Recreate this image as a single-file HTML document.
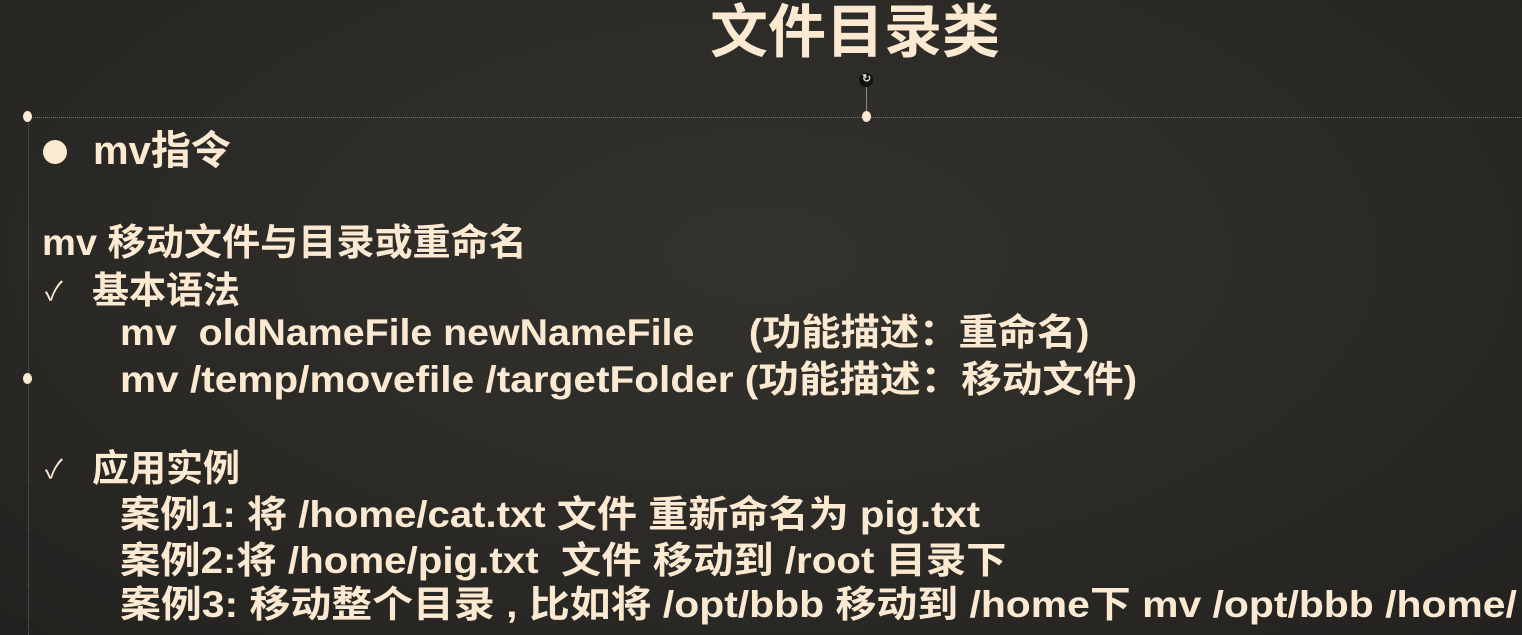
<!DOCTYPE html>
<html><head><meta charset="utf-8"><style>
html,body{margin:0;padding:0}
body{width:1522px;height:635px;overflow:hidden;position:relative;
background:radial-gradient(ellipse at 50% 40%,#34322d 0%,#2a2925 60%,#232220 100%);
font-family:"Liberation Sans","Noto Sans CJK SC",sans-serif;font-weight:bold;color:#fce9d2}
.t{position:absolute;white-space:nowrap;line-height:1;transform-origin:0 50%}
.dot{position:absolute;width:9px;height:11px;border-radius:50%;background:#fce9d2}
.ck{position:absolute;font-weight:normal;font-size:26px;line-height:1}
</style></head><body>
<div class="t" style="left:710px;top:4px;font-size:58px">文件目录类</div>
<div style="position:absolute;left:859px;top:73px;width:14px;height:14px;border-radius:50%;background:#111"></div>
<div class="t" style="left:862px;top:74px;font-size:11px;color:#ddd">↻</div>
<div style="position:absolute;left:866px;top:87px;width:1px;height:28px;background:#888"></div>
<div style="position:absolute;left:28px;top:117px;width:1494px;border-top:1px dotted #777"></div>
<div style="position:absolute;left:28px;top:117px;height:518px;border-left:1px dotted #666"></div>
<div class="dot" style="left:23px;top:111px"></div>
<div class="dot" style="left:862px;top:111px"></div>
<div class="dot" style="left:23px;top:373px"></div>
<div style="position:absolute;left:43px;top:140px;width:24px;height:24px;border-radius:50%;background:#fce9d2"></div>
<div class="t" style="left:93px;top:131px;font-size:40px">mv指令</div>
<div class="t" style="left:42px;top:224px;font-size:37px;transform:scaleX(1.03)">mv 移动文件与目录或重命名</div>
<div class="ck" style="left:45px;top:278px">✓</div>
<div class="t" style="left:92px;top:272px;font-size:37px">基本语法</div>
<div class="t" style="left:120px;top:314px;font-size:37px;transform:scaleX(1.062)">mv&nbsp; oldNameFile newNameFile&nbsp;&nbsp;&nbsp;&nbsp; (功能描述：重命名)</div>
<div class="t" style="left:120px;top:361px;font-size:37px;transform:scaleX(1.097)">mv /temp/movefile /targetFolder (功能描述：移动文件)</div>
<div class="ck" style="left:45px;top:456px">✓</div>
<div class="t" style="left:92px;top:450px;font-size:37px">应用实例</div>
<div class="t" style="left:120px;top:496px;font-size:37px;transform:scaleX(1.084)">案例1: 将 /home/cat.txt 文件 重新命名为 pig.txt</div>
<div class="t" style="left:120px;top:542px;font-size:37px;transform:scaleX(1.089)">案例2:将 /home/pig.txt&nbsp; 文件 移动到 /root 目录下</div>
<div class="t" style="left:120px;top:586px;font-size:37px;transform:scaleX(1.105)">案例3: 移动整个目录 , 比如将 /opt/bbb 移动到 /home下 mv /opt/bbb /home/</div>
</body></html>
